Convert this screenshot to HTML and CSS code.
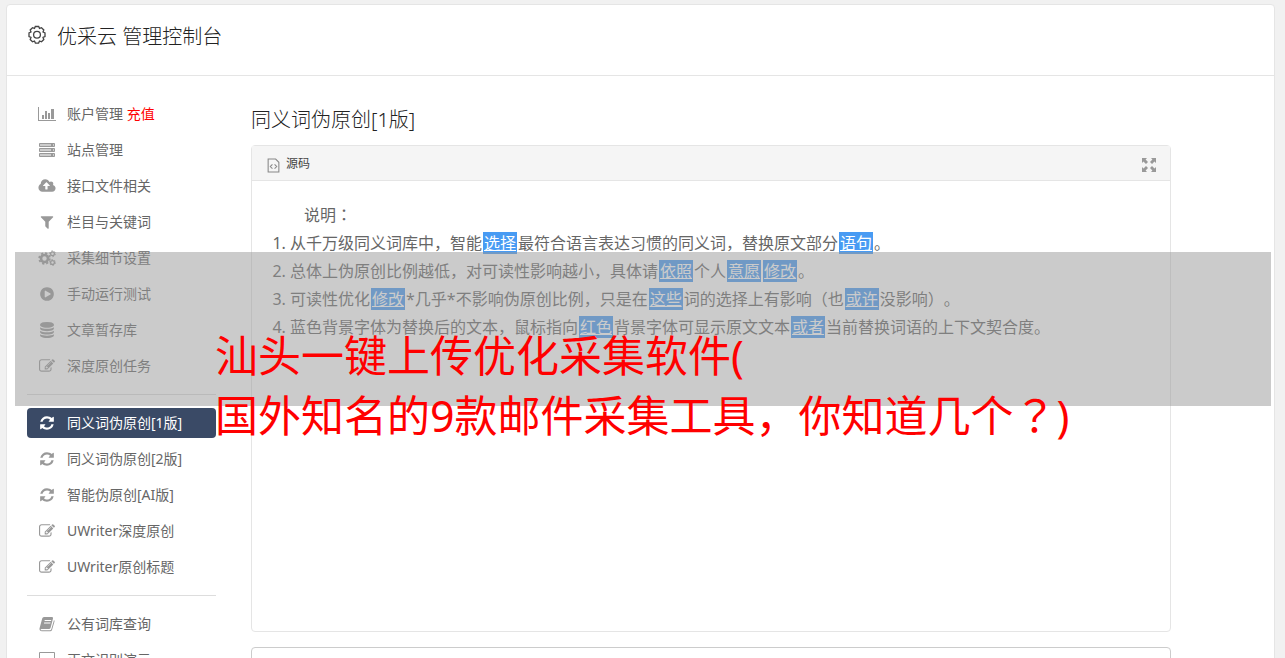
FILE: index.html
```html
<!DOCTYPE html>
<html lang="zh-CN">
<head>
  <meta charset="utf-8">
  <title>优采云 管理控制台</title>
  <link rel="stylesheet" href="styles.css">
</head>
<body>
  <svg class="symbols" aria-hidden="true">
    <symbol id="refresh" viewBox="0 0 1792 1792"><path d="M1639 1056q0 5-1 7-64 268-268 434.5t-478 166.5q-146 0-282.5-55t-243.5-157l-129 129q-19 19-45 19t-45-19-19-45v-448q0-26 19-45t45-19h448q26 0 45 19t19 45-19 45l-137 137q71 66 161 102t187 36q134 0 250-65t186-179q11-17 53-117 8-23 30-23h192q13 0 22.500 9.500t9.500 22.500zm25-800v448q0 26-19 45t-45 19h-448q-26 0-45-19t-19-45 19-45l138-138q-148-137-349-137-134 0-250 65t-186 179q-11 17-53 117-8 23-30 23h-199q-13 0-22.500-9.500t-9.500-22.500v-7q65-268 270-434.500t480-166.500q146 0 284 55.500t245 156.500l130-129q19-19 45-19t45 19 19 45z"/></symbol>
    <symbol id="edit" viewBox="0 0 1792 1792"><path d="M888 1184l116-116-152-152-116 116v56h96v96h56zm440-720q-16-16-33 1l-350 350q-17 17-1 33t33-1l350-350q17-17 1-33zm80 594v190q0 119-84.500 203.500t-203.500 84.500h-832q-119 0-203.500-84.500t-84.500-203.500v-832q0-119 84.500-203.500t203.500-84.500h832q63 0 117 25 15 7 18 23 3 17-9 29l-49 49q-14 14-32 8-23-6-45-6h-832q-66 0-113 47t-47 113v832q0 66 47 113t113 47h832q66 0 113-47t47-113v-126q0-13 9-22l64-64q15-15 35-7t20 29zm-96-738l288 288-672 672h-288v-288zm444 132l-92 92-288-288 92-92q28-28 68-28t68 28l152 152q28 28 28 68t-28 68z"/></symbol>
  </svg>

  <div class="panel">
    <header class="topbar">
      <svg class="gear" viewBox="0 0 20 20"><path d="M8.300 1.500h3.400l.8 1.900 2-.7 2.300 2.300-.8 2 2 .9v3.600l-2 .8.8 2.200-2.300 2.300-2-.8-.9 2.100H8.400l-.9-2.100-2 .8-2.300-2.300.8-2.200-2-.8V7.900l2-.9-.8-2 2.300-2.300 2 .7z"/><circle cx="10" cy="9.800" r="3.400"/></svg>
      <h1>优采云 管理控制台</h1>
    </header>

    <div class="main">
      <nav class="menu">
        <a href="#"><svg class="icon wide" viewBox="0 0 18 16"><path d="M0 1h1v13h17v1H0zM4 9h2v4H4zM7 5h2v8H7zM10 7h2v6h-2zM13 3h3v10h-3z"/></svg><span>账户管理 <em>充值</em></span></a>
        <a href="#"><svg class="icon" viewBox="0 0 16 16"><path class="rack" d="M.5 1.500h15v3H.5zM.5 6.500h15v3H.5zM.5 11.500h15v3H.5z"/><path d="M12 2h2v2h-2zM12 7h2v2h-2zM12 12h2v2h-2z"/></svg><span>站点管理</span></a>
        <a href="#"><svg class="icon wide" viewBox="0 0 1920 1792"><path d="M1280 864q0-14-9-23l-352-352q-9-9-23-9t-23 9l-351 351q-10 12-10 24 0 14 9 23t23 9h224v352q0 13 9.500 22.500t22.500 9.500h192q13 0 22.500-9.500t9.500-22.500v-352h224q13 0 22.500-9.500t9.500-22.500zm640 288q0 159-112.500 271.500t-271.500 112.500h-1088q-185 0-316.500-131.500t-131.500-316.500q0-130 70-240t188-165q-2-30-2-43 0-212 150-362t362-150q156 0 285.500 87t188.500 231q71-62 166-62 106 0 181 75t75 181q0 76-41 138 130 31 213.500 135.500t83.500 238.500z"/></svg><span>接口文件相关</span></a>
        <a href="#"><svg class="icon" viewBox="0 0 1792 1792"><path d="M1595 295q17 41-14 70l-493 493v742q0 42-39 59-13 5-25 5-27 0-45-19l-256-256q-19-19-19-45v-486l-493-493q-31-29-14-70 17-39 59-39h1280q42 0 59 39z"/></svg><span>栏目与关键词</span></a>
        <a href="#"><svg class="icon wide" viewBox="0 0 18 16"><g class="cog"><circle cx="6.500" cy="8.500" r="3.500" stroke-width="2.600"/><circle cx="6.500" cy="8.500" r="5.300" stroke-width="1.800" stroke-dasharray="2.200 1.960"/><circle cx="14.500" cy="3.800" r="1.900" stroke-width="1.300"/><circle cx="14.500" cy="3.800" r="2.900" stroke-width="1" stroke-dasharray="1.500 1.530"/><circle cx="14.500" cy="12.500" r="1.900" stroke-width="1.300"/><circle cx="14.500" cy="12.500" r="2.900" stroke-width="1" stroke-dasharray="1.500 1.530"/></g></svg><span>采集细节设置</span></a>
        <a href="#"><svg class="icon" viewBox="0 0 1792 1792"><path d="M896 128q209 0 385.500 103t279.500 279.500 103 385.500-103 385.500-279.500 279.500-385.500 103-385.500-103-279.500-279.500-103-385.500 103-385.500 279.500-279.500 385.500-103zm384 823q32-18 32-55t-32-55l-544-320q-31-19-64-1-32 19-32 56v640q0 37 32 56 16 8 32 8 17 0 32-9z"/></svg><span>手动运行测试</span></a>
        <a href="#"><svg class="icon" viewBox="0 0 1792 1792"><path d="M896 768q237 0 443-43t325-127v170q0 69-103 128t-280 93.500-385 34.500-385-34.500-280-93.500-103-128v-170q119 84 325 127t443 43zm0 768q237 0 443-43t325-127v170q0 69-103 128t-280 93.500-385 34.500-385-34.500-280-93.500-103-128v-170q119 84 325 127t443 43zm0-384q237 0 443-43t325-127v170q0 69-103 128t-280 93.500-385 34.500-385-34.500-280-93.500-103-128v-170q119 84 325 127t443 43zm0-1152q208 0 385 34.500t280 93.500 103 128v128q0 69-103 128t-280 93.500-385 34.500-385-34.500-280-93.500-103-128v-128q0-69 103-128t280-93.500 385-34.500z"/></svg><span>文章暂存库</span></a>
        <a href="#"><svg class="icon"><use href="#edit"/></svg><span>深度原创任务</span></a>
        <hr>
        <a href="#" class="active"><svg class="icon"><use href="#refresh"/></svg><span>同义词伪原创[1版]</span></a>
        <a href="#"><svg class="icon"><use href="#refresh"/></svg><span>同义词伪原创[2版]</span></a>
        <a href="#"><svg class="icon"><use href="#refresh"/></svg><span>智能伪原创[AI版]</span></a>
        <a href="#"><svg class="icon"><use href="#edit"/></svg><span>UWriter深度原创</span></a>
        <a href="#"><svg class="icon"><use href="#edit"/></svg><span>UWriter原创标题</span></a>
        <hr>
        <a href="#"><svg class="icon" viewBox="0 0 16 16"><path fill-rule="evenodd" d="M5 1h8q1.500 0 1 1.500L11.500 12q-.4 1-1.500 1H2.500q-1 0-.8.700t1.300.5h8q1 0 1.300-1L15 4q.8.500.5 1.500L13 14q-.4 1.300-1.800 1.300H3Q.3 15.300.5 12.500L3.200 2.500Q3.600 1 5 1zM5.800 4l-.3 1H12l.3-1zM5.200 6.500l-.3 1h6.400l.3-1z"/></svg><span>公有词库查询</span></a>
        <a href="#"><svg class="icon wide" viewBox="0 0 18 16"><path fill-rule="evenodd" d="M2 0h14q1 0 1 1v11q0 1-1 1h-5l1 2H6l1-2H2q-1 0-1-1V1q0-1 1-1zM2 1v9h14V1z"/></svg><span>正文识别演示</span></a>
      </nav>

      <div class="content">
        <h2>同义词伪原创[1版]</h2>
        <div class="editor">
          <div class="toolbar">
            <button type="button"><svg class="source" viewBox="0 0 12 14"><path d="M1 1h7l3 3v9H1zM5 6L3 8l2 2M7 6l2 2-2 2"/></svg>源码</button>
            <button type="button" aria-label="全屏"><svg class="expand" viewBox="0 0 14 14"><path d="M0 0h5L3.600 1.500 6 4 4 6 1.500 3.600 0 5zM14 0v5l-1.500-1.400L10 6 8 4l2.400-2.500L9 0zM0 14V9l1.500 1.400L4 8l2 2-2.400 2.500L5 14zM14 14H9l1.400-1.500L8 10l2-2 2.500 2.400L14 9z"/></svg></button>
          </div>
          <div class="text">
            <p>说明<span class="mid" lang="zh-TW">：</span></p>
            <ol>
              <li>从千万级同义词库中，智能<a href="#">选择</a>最符合语言表达习惯的同义词，替换原文部分<a href="#">语句</a>。</li>
              <li>总体上伪原创比例越低，对可读性影响越小，具体请<a href="#">依照</a>个人<a href="#">意愿</a><a href="#">修改</a>。</li>
              <li>可读性优化<a href="#">修改</a>*几乎*不影响伪原创比例，只是在<a href="#">这些</a>词的选择上有影响（也<a href="#">或许</a>没影响）。</li>
              <li>蓝色背景字体为替换后的文本，鼠标指向<a href="#">红色</a>背景字体可显示原文文本<a href="#">或者</a>当前替换词语的上下文契合度。</li>
            </ol>
          </div>
        </div>
        <textarea class="result" aria-label="结果"></textarea>
      </div>
    </div>
  </div>

  <div class="banner">汕头一键上传优化采集软件(<br>国外知名的9款邮件采集工具，你知道几个<span class="mid" lang="zh-TW">？</span>)</div>
</body>
</html>
```
FILE: styles.css
```css
* {
  box-sizing: border-box;
}
html {
  scrollbar-width: none;
}
body {
  margin: 0;
  padding: 4px 10px 0 6px;
  background: #f1f1f1;
  color: #666;
  font: 14px/20px "Noto Sans", "Noto Sans CJK SC", sans-serif;
  text-spacing-trim: space-all;
  position: relative;
}
h1, h2 {
  margin: 0;
  color: #222;
  font-size: 20px;
  font-weight: 300;
  line-height: 30px;
}
.symbols {
  display: none;
}
.panel {
  background: #fff;
  border: 1px solid #e5e5e5;
  border-radius: 4px;
}
.topbar {
  display: flex;
  gap: 10px;
  padding: 17px 20px 23px;
  border-bottom: 1px solid #e5e5e5;
}
.gear {
  width: 20px;
  height: 20px;
  margin-top: 3px;
  fill: none;
  stroke: #444;
  stroke-width: 1.3;
}
.main {
  display: flex;
  gap: 35px;
  padding: 23px 20px;
}

/* left menu */
.menu {
  width: 189px;
  flex-shrink: 0;
  display: flex;
  flex-direction: column;
  gap: 6px;
}
.menu a {
  display: flex;
  align-items: center;
  gap: 12px;
  height: 30px;
  padding: 0 12px;
  border-radius: 4px;
  color: #666;
  text-decoration: none;
}
.menu em {
  color: #f00;
  font-style: normal;
}
.menu hr {
  width: 100%;
  height: 1px;
  margin: 7px 0;
  border: 0;
  background: #ddd;
}
.menu .active {
  background: #3a4a66;
  color: #fff;
}
.icon {
  width: 16px;
  height: 16px;
  flex-shrink: 0;
  fill: #999;
}
.wide {
  width: 18px;
  margin: 0 -1px;
}
.active .icon {
  fill: #fff;
}
.cog {
  fill: none;
  stroke: #999;
}
.rack {
  fill: #ccc;
  stroke: #999;
}

/* editor */
.content {
  flex: 1;
  max-width: 920px;
  padding-top: 6px;
}
.editor {
  margin: 10px 0 15px;
  border: 1px solid #e5e5e5;
  border-radius: 4px;
}
.toolbar {
  display: flex;
  justify-content: space-between;
  height: 35px;
  padding: 0 14px 0 15px;
  background: #f5f5f5;
  border-bottom: 1px solid #e5e5e5;
}
.toolbar button {
  display: flex;
  align-items: center;
  gap: 6px;
  padding: 2px 0 0;
  border: 0;
  background: none;
  color: #444;
  font: inherit;
  font-size: 12px;
}
.source {
  width: 13px;
  height: 15px;
  margin-top: 2px;
  fill: none;
  stroke: #888;
}
.expand {
  width: 14px;
  height: 14px;
  margin-top: 2px;
  fill: #999;
}
.text {
  min-height: 450px;
  padding: 20px;
  font-size: 16px;
  line-height: 28px;
}
.text p {
  margin: 0;
  text-indent: 2em;
}
.text ol {
  margin: 0;
  padding-left: 18px;
}
.text a {
  margin: 0 1px;
  padding: 0 1px;
  background: #489bf3;
  color: #fff;
}
.result {
  display: block;
  width: 100%;
  height: 200px;
  border: 1px solid #ccc;
  border-radius: 4px;
  resize: none;
}

/* punctuation centred in its cell */
.mid {
  font-family: "Noto Sans CJK TC", sans-serif;
  line-height: 1;
}

/* translucent strip over the page, the second line hangs below it */
.banner {
  position: absolute;
  top: 252px;
  left: 15px;
  right: 14px;
  height: 154px;
  padding: 74px 0 0 200px;
  background: rgba(152, 152, 152, 0.5);
  color: #f00;
  font-size: 43px;
  line-height: 60px;
  white-space: nowrap;
}
```
